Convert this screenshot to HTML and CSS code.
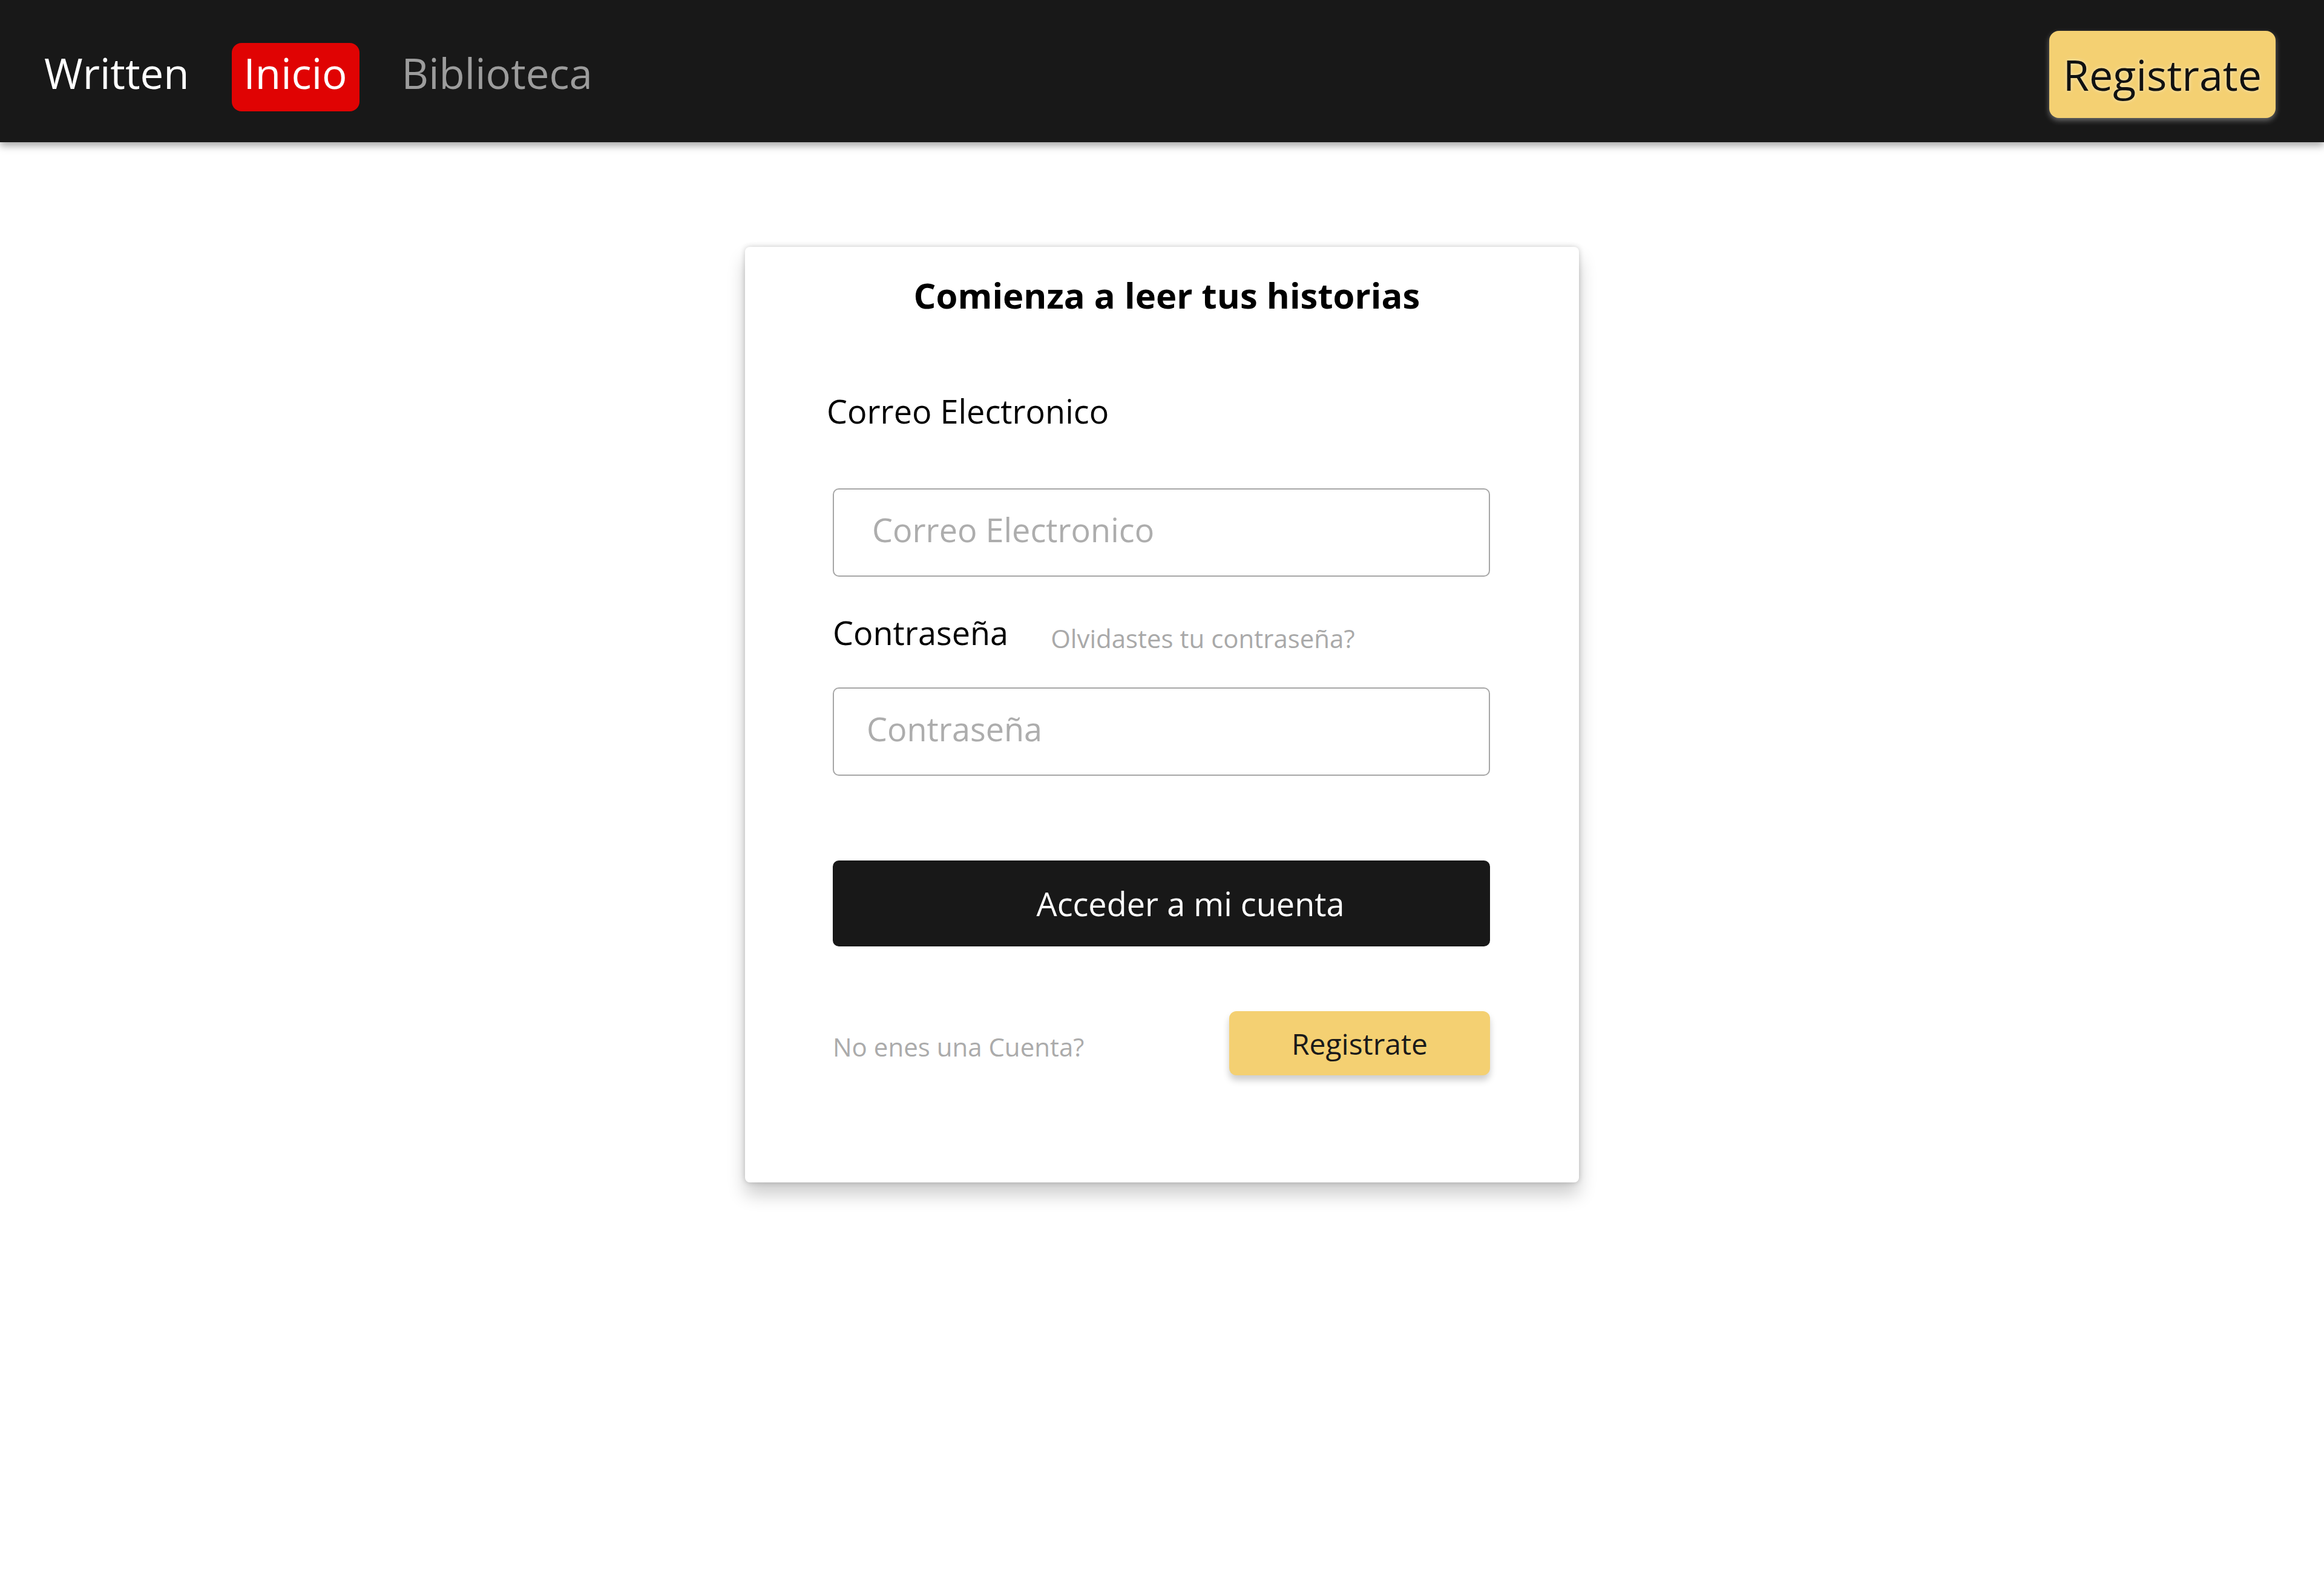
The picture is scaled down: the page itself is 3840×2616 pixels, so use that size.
FILE: index.html
```html
<!DOCTYPE html>
<html lang="es">
<head>
<meta charset="utf-8">
<title>Written - Iniciar sesión</title>
<link rel="stylesheet" href="styles.css">
</head>
<body>
<header class="navbar">
  <nav class="nav-left">
    <a class="brand" href="#">Written</a>
    <a class="nav-link active" href="#">Inicio</a>
    <a class="nav-link muted" href="#">Biblioteca</a>
  </nav>
  <a class="btn-register-top" href="#">Registrate</a>
</header>
<main class="page">
  <form class="card">
    <h1 class="card-title">Comienza a leer tus historias</h1>
    <label class="field-label email-label" for="email">Correo Electronico</label>
    <input class="field-input email-input" id="email" type="email" placeholder="Correo Electronico">
    <div class="pass-row">
      <label class="field-label" for="pass">Contraseña</label>
      <a class="forgot" href="#">Olvidastes tu contraseña?</a>
    </div>
    <input class="field-input pass-input" id="pass" type="password" placeholder="Contraseña">
    <button class="btn-login" type="button">Acceder a mi cuenta</button>
    <div class="signup-row">
      <span class="no-account">No enes una Cuenta?</span>
      <button class="btn-register" type="button">Registrate</button>
    </div>
  </form>
</main>
</body>
</html>
```
FILE: styles.css
```css
* { box-sizing: border-box; }
html, body { margin: 0; padding: 0; background: #ffffff; }
body { font-family: "Open Sans", "Noto Sans", sans-serif; color: #000; min-height: 100vh; }
a { text-decoration: none; }

.navbar {
  height: 235px;
  background: #181818;
  display: flex;
  align-items: flex-start;
  justify-content: space-between;
  padding: 51px 80px 0 73px;
  box-shadow: 0 6px 12px rgba(0, 0, 0, 0.35);
  position: relative;
  z-index: 1;
}
.nav-left {
  display: flex;
  align-items: flex-start;
  gap: 70px;
  margin-top: 20px;
}
.brand, .nav-link {
  font-size: 69px;
  line-height: 98px;
  color: #ffffff;
}
.nav-link.active {
  background: #e00303;
  border-radius: 16px;
  padding: 0 20px 15px;
}
.nav-link.muted { color: #9c9c9c; }

.btn-register-top {
  display: flex;
  align-items: center;
  justify-content: center;
  width: 374px;
  height: 144px;
  background: #f4d072;
  color: #111;
  font-size: 70px;
  line-height: 98px;
  border-radius: 16px;
  box-shadow: 0 4px 10px rgba(210, 210, 210, 0.45);
  text-shadow: 0 0 6px rgba(255, 255, 255, 0.55);
}

.page {
  display: flex;
  justify-content: center;
  padding: 173px 0 200px;
}
.card {
  width: 1378px;
  padding: 52px 147px 177px 145px;
  background: #fff;
  border-radius: 8px;
  box-shadow: 0 0 10px rgba(0, 0, 0, 0.2), 0 20px 30px rgba(0, 0, 0, 0.2);
  display: flex;
  flex-direction: column;
}
.card-title {
  margin: 0;
  font-size: 58px;
  line-height: 56px;
  font-weight: 700;
  text-align: center;
  padding-left: 18px;
}
.field-label {
  font-size: 54px;
  line-height: 56px;
  color: #000;
}
.email-label {
  margin-top: 135px;
  margin-left: -10px;
}
.field-input {
  display: block;
  width: 100%;
  height: 146px;
  border: 2px solid #a6a6a6;
  border-radius: 10px;
  font-family: inherit;
  font-size: 54px;
  padding: 0 0 10px 63px;
  margin: 0;
  background: #fff;
  outline: none;
}
.field-input::placeholder { color: #adadad; opacity: 1; }
.email-input { margin-top: 100px; }
.pass-input { margin-top: 60px; padding-left: 54px; }

.pass-row {
  display: flex;
  align-items: flex-start;
  gap: 70px;
  margin-top: 64px;
}
.forgot {
  font-size: 42px;
  line-height: 42px;
  color: #a9a9a9;
  margin-top: 17px;
}

.btn-login {
  margin-top: 140px;
  height: 142px;
  width: 100%;
  border: none;
  border-radius: 10px;
  background: #181818;
  color: #fff;
  font-family: inherit;
  font-size: 54px;
  padding: 0 0 0 96px;
}

.signup-row {
  margin-top: 107px;
  display: flex;
  align-items: center;
  justify-content: space-between;
}
.no-account {
  font-size: 42px;
  color: #ababab;
  padding-top: 11px;
}
.btn-register {
  width: 431px;
  height: 106px;
  border: none;
  border-radius: 12px;
  background: #f4d072;
  color: #1a1a1a;
  font-family: inherit;
  font-size: 48px;
  padding: 0;
  box-shadow: 0 8px 12px rgba(0, 0, 0, 0.2);
}
```
